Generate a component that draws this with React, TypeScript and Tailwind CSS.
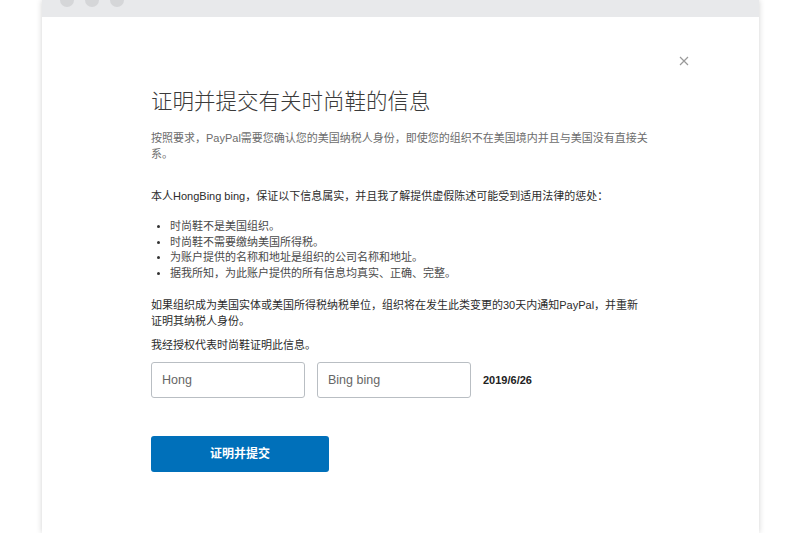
export default function App() {
  const bullets = [
    "时尚鞋不是美国组织。",
    "时尚鞋不需要缴纳美国所得税。",
    "为账户提供的名称和地址是组织的公司名称和地址。",
    "据我所知，为此账户提供的所有信息均真实、正确、完整。",
  ];

  return (
    <div
      className="w-full h-[533px] overflow-hidden bg-white pl-[42px]"
      style={{ fontFamily: '"Liberation Sans", "Noto Sans CJK SC", sans-serif' }}
    >
      {/* Window */}
      <div className="relative w-[717px] h-full bg-white shadow-[0_0_6px_rgba(0,0,0,0.18)]">
        {/* Top bar */}
        <div className="h-[17px] bg-[#e8e9eb] overflow-hidden flex gap-[11px] pl-[18px]">
          <span className="w-[14px] h-[14px] -mt-[7px] rounded-full bg-[#d5d6d8]" />
          <span className="w-[14px] h-[14px] -mt-[7px] rounded-full bg-[#d5d6d8]" />
          <span className="w-[14px] h-[14px] -mt-[7px] rounded-full bg-[#d5d6d8]" />
        </div>

        {/* Close */}
        <button className="absolute left-[637px] top-[56px] w-[10px] h-[10px] text-[#9a9a9a]">
          <svg viewBox="0 0 10 10" className="w-[10px] h-[10px]">
            <path d="M1 1L9 9M9 1L1 9" stroke="currentColor" strokeWidth="1.2" />
          </svg>
        </button>

        {/* Content */}
        <div className="pl-[109px] pt-[70px]">
          <h1 className="text-[21.5px] leading-[30px] font-light text-[#3a3a3a]">
            证明并提交有关时尚鞋的信息
          </h1>

          <p className="mt-[13px] w-[500px] text-[11px] leading-[16px] text-[#6c6c6c]">
            按照要求，PayPal需要您确认您的美国纳税人身份，即使您的组织不在美国境内并且与美国没有直接关系。
          </p>

          <p className="mt-[26px] text-[11px] leading-[16px] text-[#2c2c2c]">
            本人HongBing bing，保证以下信息属实，并且我了解提供虚假陈述可能受到适用法律的惩处：
          </p>

          <ul className="mt-[15px] text-[11px] leading-[15.5px] text-[#4a4a4a]">
            {bullets.map((b, i) => (
              <li key={i} className="flex items-center">
                <span className="w-[3px] h-[3px] rounded-full bg-[#333] ml-[6px] mr-[10px]" />
                {b}
              </li>
            ))}
          </ul>

          <p className="mt-[16px] w-[490px] text-[11px] leading-[16px] text-[#2c2c2c]">
            如果组织成为美国实体或美国所得税纳税单位，组织将在发生此类变更的30天内通知PayPal，并重新证明其纳税人身份。
          </p>

          <p className="mt-[8px] text-[11px] leading-[16px] text-[#2c2c2c]">
            我经授权代表时尚鞋证明此信息。
          </p>

          {/* Inputs */}
          <div className="mt-[9px] flex items-center gap-[12px]">
            <div className="w-[154px] h-[36px] border border-[#b9bec3] rounded-[3px] flex items-center px-[10px] text-[12.5px] text-[#666]">
              Hong
            </div>
            <div className="w-[154px] h-[36px] border border-[#b9bec3] rounded-[3px] flex items-center px-[10px] text-[12.5px] text-[#666]">
              Bing bing
            </div>
            <span className="text-[11px] font-bold text-[#222]">2019/6/26</span>
          </div>

          <button className="mt-[38px] w-[178px] h-[36px] rounded-[3px] bg-[#0070ba] text-white text-[12px] font-bold">
            证明并提交
          </button>
        </div>
      </div>
    </div>
  );
}
